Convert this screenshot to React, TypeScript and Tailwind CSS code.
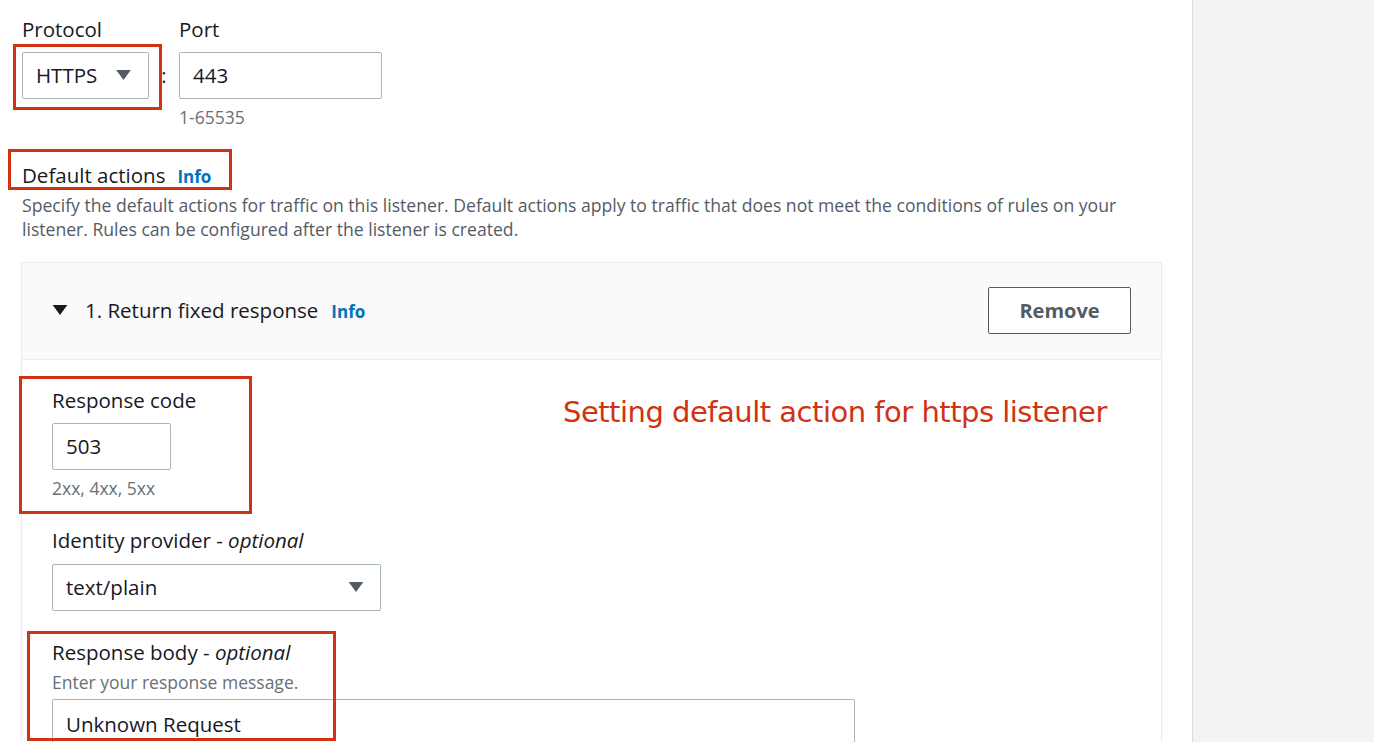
function Caret({ className }: { className?: string }) {
  return (
    <svg viewBox="0 0 16 12" className={className} fill="currentColor">
      <path d="M0 0h16L8 11z" />
    </svg>
  );
}

function App() {
  return (
    <div className="relative flex min-h-[742px] w-[1374px] overflow-hidden font-['Open_Sans',sans-serif] text-[#16191f]">
      <div className="w-[1193px] border-r border-[#d5dbdb] bg-white pl-[22px] pt-[17px]">
        <div className="flex items-start">
          <div className="flex flex-col">
            <label className="text-[20.5px] leading-[24px]">Protocol</label>
            <div className="mt-[11px] flex h-[47px] w-[127px] items-center justify-between rounded-[2px] border border-[#aab7b8] pl-[13px] pr-[17px] text-[20.5px]">
              <span>HTTPS</span>
              <Caret className="h-[11px] w-[15px] text-[#545b64]" />
            </div>
          </div>
          <div className="mt-[35px] w-[30px] text-center text-[20px] leading-[47px]">:</div>
          <div className="flex flex-col">
            <label className="text-[20.5px] leading-[24px]">Port</label>
            <div className="mt-[11px] flex h-[47px] w-[203px] items-center rounded-[2px] border border-[#aab7b8] pl-[13px] text-[20.5px]">
              443
            </div>
            <div className="mt-[8px] text-[17.5px] leading-[20px] text-[#687078]">1-65535</div>
          </div>
        </div>

        <div className="mt-[35px] flex items-baseline gap-[12px]">
          <span className="text-[20.5px] leading-[26px]">Default actions</span>
          <span className="text-[17px] font-bold text-[#0073bb]">Info</span>
        </div>
        <p className="mt-[3px] w-[1110px] text-[17.6px] leading-[24px] text-[#545b64]">
          Specify the default actions for traffic on this listener. Default actions apply to traffic that does not meet the conditions of rules on your listener. Rules can be configured after the listener is created.
        </p>

        <div className="mt-[21px] w-[1141px] -ml-[1px] border border-[#eaeded] shadow-[0_1px_1px_rgba(0,28,36,0.1)]">
          <div className="flex h-[97px] items-center justify-between border-b border-[#eaeded] bg-[#fafafa] pl-[30px] pr-[30px]">
            <div className="flex items-baseline -mt-[1px]">
              <Caret className="mr-[17px] h-[11px] w-[16px] self-center text-[#16191f]" />
              <span className="text-[20.5px]">1. Return fixed response</span>
              <span className="ml-[13px] text-[17px] font-bold text-[#0073bb]">Info</span>
            </div>
            <button className="h-[47px] w-[143px] rounded-[2px] border border-[#545b64] bg-white text-[20px] font-bold text-[#545b64]">
              Remove
            </button>
          </div>

          <div className="h-[400px] pl-[30px] pt-[28px]">
            <label className="block text-[20.5px] leading-[24px]">Response code</label>
            <div className="mt-[11px] flex h-[47px] w-[119px] items-center rounded-[2px] border border-[#aab7b8] pl-[13px] text-[20.5px]">
              503
            </div>
            <div className="mt-[8px] text-[17.5px] leading-[20px] text-[#687078]">2xx, 4xx, 5xx</div>

            <label className="mt-[30px] block text-[20.5px] leading-[24px]">
              Identity provider - <i>optional</i>
            </label>
            <div className="mt-[12px] flex h-[47px] w-[329px] items-center justify-between rounded-[2px] border border-[#aab7b8] pl-[13px] pr-[16px] text-[20.5px]">
              <span>text/plain</span>
              <Caret className="h-[11px] w-[16px] text-[#545b64]" />
            </div>

            <label className="mt-[29px] block text-[20.5px] leading-[24px]">
              Response body - <i>optional</i>
            </label>
            <div className="mt-[8px] text-[17.5px] leading-[20px] text-[#687078]">Enter your response message.</div>
            <div className="mt-[7px] h-[120px] w-[803px] rounded-[2px] border border-[#aab7b8] pl-[13px] pt-[9px] text-[20.5px]">
              Unknown Request
            </div>
          </div>
        </div>
      </div>
      <div className="flex-1 bg-[#f2f3f3]" />

      <div className="absolute left-[563px] top-[392px] font-['DejaVu_Sans',sans-serif] text-[29px] leading-[40px] tracking-[-0.5px] text-[#d13212]">
        Setting default action for https listener
      </div>
      <div className="absolute left-[13px] top-[44px] h-[66px] w-[149px] border-[3px] border-[#d13212]" />
      <div className="absolute left-[8px] top-[149px] h-[41px] w-[224px] border-[3px] border-[#d13212]" />
      <div className="absolute left-[19px] top-[376px] h-[138px] w-[233px] border-[3px] border-[#d13212]" />
      <div className="absolute left-[27px] top-[631px] h-[110px] w-[309px] border-[3px] border-[#d13212]" />
    </div>
  );
}

export default App;
